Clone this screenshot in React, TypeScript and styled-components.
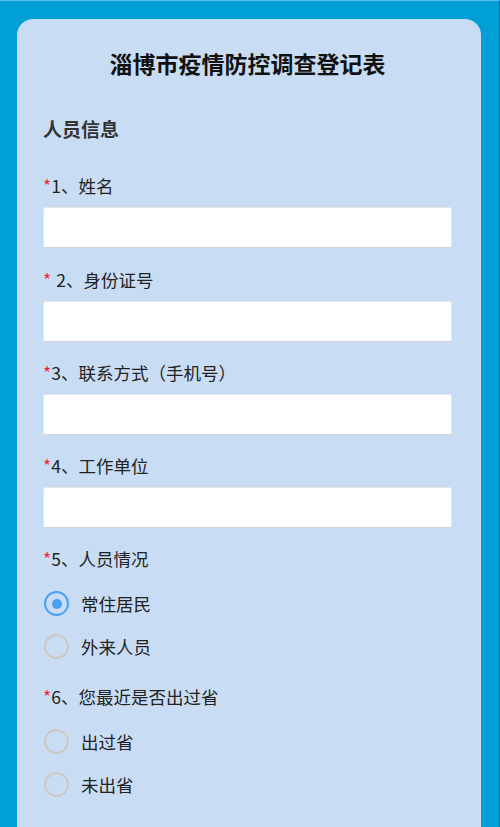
import React from "react";
import styled, { createGlobalStyle } from "styled-components";

const Global = createGlobalStyle`
  html, body { margin: 0; padding: 0; }
  body {
    background: #00a0d6;
    border-top: 1px solid #5cc0e6;
    border-right: 1px solid #0a6f98;
    font-family: "Noto Sans CJK SC", "Noto Sans", sans-serif;
  }
`;

const Page = styled.div`
  padding: 18px 18px 0 17px;
`;

const Card = styled.div`
  background: #c8ddf4;
  border-radius: 16px 16px 0 0;
  padding: 27px 29px 40px 26px;
  min-height: 790px;
  box-sizing: border-box;
`;

const Title = styled.h1`
  margin: 0;
  text-align: center;
  font-size: 23px;
  line-height: 34px;
  font-weight: 700;
  color: #111;
`;

const Section = styled.h2`
  margin: 37px 0 0;
  font-size: 19px;
  line-height: 24px;
  font-weight: 700;
  color: #333;
`;

const Question = styled.div<{ $mt: number }>`
  margin-top: ${(p) => p.$mt}px;
`;

const Label = styled.div`
  font-size: 17.5px;
  line-height: 22px;
  color: #222;
`;

const Star = styled.span<{ $gap?: boolean }>`
  color: #f5222d;
  margin-right: ${(p) => (p.$gap ? "5px" : "0")};
`;

const Input = styled.div`
  margin-top: 10px;
  height: 41px;
  background: #fff;
  border-radius: 2px;
  border: 1px solid #e4e8ee;
  border-bottom-color: #d4d4d4;
  box-sizing: border-box;
`;

const Group = styled.div`
  margin-top: 12px;
  display: flex;
  flex-direction: column;
`;

const Option = styled.div`
  height: 43px;
  display: flex;
  align-items: center;
  gap: 12px;
  font-size: 17.5px;
  color: #222;
`;

const Radio = styled.span<{ $checked?: boolean }>`
  width: 25px;
  height: 25px;
  box-sizing: border-box;
  border-radius: 50%;
  border: 2px solid ${(p) => (p.$checked ? "#4a9ff5" : "#cdc7c0")};
  display: flex;
  align-items: center;
  justify-content: center;
  margin-left: 1px;
  &::after {
    content: "";
    width: 10px;
    height: 10px;
    border-radius: 50%;
    background: #4a9ff5;
    display: ${(p) => (p.$checked ? "block" : "none")};
  }
`;

const inputs = [
  { t: "1、姓名", gap: false, mt: 34 },
  { t: "2、身份证号", gap: true, mt: 21 },
  { t: "3、联系方式（手机号）", gap: false, mt: 20 },
  { t: "4、工作单位", gap: false, mt: 20 },
];

const radios = [
  { t: "5、人员情况", opts: ["常住居民", "外来人员"], sel: 0, mt: 20 },
  { t: "6、您最近是否出过省", opts: ["出过省", "未出省"], sel: -1, mt: 18 },
];

export default function App() {
  return (
    <>
      <Global />
      <Page>
        <Card>
          <Title>淄博市疫情防控调查登记表</Title>
          <Section>人员信息</Section>
          {inputs.map((q) => (
            <Question key={q.t} $mt={q.mt}>
              <Label>
                <Star $gap={q.gap}>*</Star>
                {q.t}
              </Label>
              <Input />
            </Question>
          ))}
          {radios.map((q) => (
            <Question key={q.t} $mt={q.mt}>
              <Label>
                <Star>*</Star>
                {q.t}
              </Label>
              <Group>
                {q.opts.map((o, j) => (
                  <Option key={o}>
                    <Radio $checked={j === q.sel} />
                    {o}
                  </Option>
                ))}
              </Group>
            </Question>
          ))}
        </Card>
      </Page>
    </>
  );
}
